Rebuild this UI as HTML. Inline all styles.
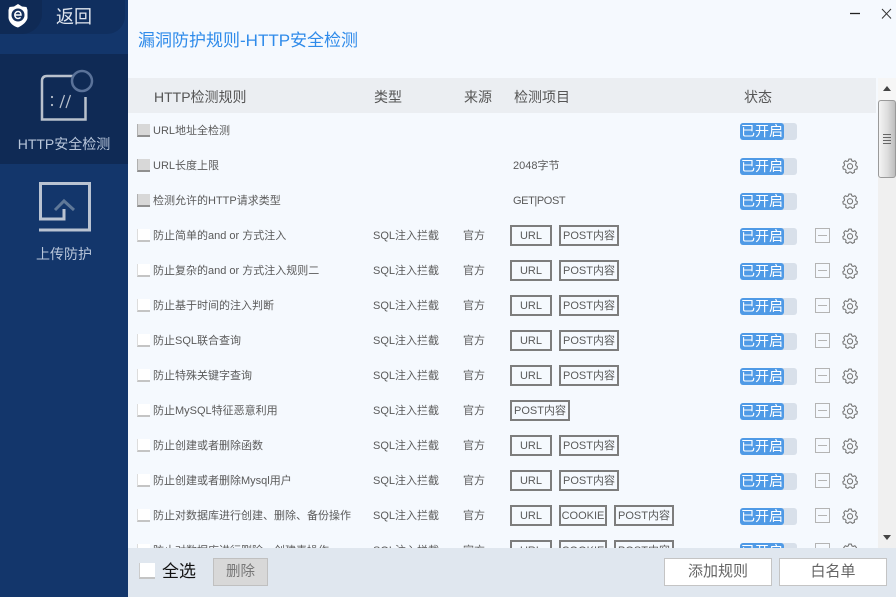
<!DOCTYPE html>
<html><head><meta charset="utf-8">
<style>
html,body{margin:0;padding:0;width:896px;height:597px;overflow:hidden;background:#f5f9fe}
body{position:relative;font-family:"Liberation Sans","Noto Sans CJK SC",sans-serif;color:#555}
*{box-sizing:border-box}
.a{position:absolute;white-space:nowrap}
.t{position:absolute;font-size:11px;line-height:16px;height:16px;margin-top:1px;white-space:nowrap;color:#5a5a5a}
.h{position:absolute;top:88px;font-size:14px;line-height:18px;color:#555;white-space:nowrap}
.b{position:absolute;height:21px;border:2px solid #7d7d7d;font-size:11px;line-height:18px;text-align:center;color:#5a5a5a;white-space:nowrap}
.tg{position:absolute;left:740px;width:57px;height:17px;background:#d8e0ea;border-radius:3px}
.tg i{position:absolute;left:0;top:0;width:44px;height:17px;background:#4f9ae6;border-radius:3px;color:#fff;font-style:normal;font-size:14px;line-height:17px;text-align:center}
.ck{position:absolute;left:137px;width:13px;height:13px;background:#fff;border-left:1px solid #ddd;border-bottom:2px solid #c4c4c4}
.ck.d{background:#d8d8d8;border-left:1px solid #b0b0b0;border-bottom:2px solid #909090}
.m{position:absolute;left:815px;width:15px;height:15px;border:1px solid #b4b4b4}
.m:after{content:"";position:absolute;left:2px;right:2px;top:6px;height:1px;background:#b4b4b4}
svg.g{position:absolute;left:842px;width:16px;height:16px}
</style></head><body>
<svg width="0" height="0" style="position:absolute"><defs>
<symbol id="gear" viewBox="0 0 16 16"><path d="M8 1l1.300.1.6 1.800 1.300.6 1.700-.8 1.600 2-.9 1.600.3 1.400 1.500 1-.5 2.400-1.800.2-.9 1.100.3 1.900-2.200 1.100-1.300-1.300H7.200l-1.300 1.300-2.200-1.100.3-1.900-.9-1.100-1.800-.2-.5-2.400 1.500-1 .3-1.400-.9-1.600 1.600-2 1.700.8 1.300-.6.6-1.800z" fill="none" stroke="#777" stroke-width="1.100" stroke-linejoin="round"/><circle cx="8" cy="8.300" r="2.600" fill="none" stroke="#777" stroke-width="1.100"/></symbol>
</defs></svg>

<!-- sidebar -->
<div class="a" style="left:0;top:0;width:128px;height:597px;background:#13366b"></div>
<div class="a" style="left:0;top:0;width:125px;height:34px;background:#102f5f;border-bottom-right-radius:18px"></div>
<div class="a" style="left:0;top:0;width:42px;height:34px;background:#0f2a55;border-bottom-right-radius:20px"></div>
<svg class="a" style="left:6px;top:3px" width="24" height="26" viewBox="0 0 24 26"><path d="M12 1l4 2.500 4.500.5 1 3v8c-.5 3.500-5 7.500-9.500 9.500C7.500 23.500 3 19.500 2.500 15V7l1-3 4.500-.5z" fill="#fff"/><circle cx="12" cy="12" r="6.500" fill="#16305c"/><path d="M8.800 12h6.200c0-2.200-1.300-3.500-3-3.500s-3.200 1.500-3.200 3.500 1.400 3.500 3.200 3.500c1.100 0 1.900-.4 2.600-1.100" fill="none" stroke="#fff" stroke-width="1.500"/></svg>
<div class="a" style="left:56px;top:5px;font-size:18px;line-height:24px;color:#dfe5ee">返回</div>
<div class="a" style="left:0;top:54px;width:128px;height:110px;background:#0f2a55"></div>
<svg class="a" style="left:36px;top:66px" width="62" height="60" viewBox="0 0 62 60">
<path d="M37 10H11q-5 0-5 5v38.500h43.500V31" fill="none" stroke="#b9c1cd" stroke-width="2.500"/>
<circle cx="46" cy="15" r="10" fill="none" stroke="#5a7299" stroke-width="2.500"/>
<circle cx="16" cy="31" r="1.100" fill="#b9c1cd"/><circle cx="16" cy="39" r="1.100" fill="#b9c1cd"/>
<path d="M24 42l4.500-13M30 42l4.500-13" stroke="#b9c1cd" stroke-width="1.200"/>
</svg>
<div class="a" style="left:0;top:135px;width:128px;text-align:center;font-size:14px;line-height:18px;color:#b8c6da">HTTP安全检测</div>
<svg class="a" style="left:38px;top:181px" width="54" height="52" viewBox="0 0 54 52">
<path d="M1 49h50.500V2.500H2.500V38H26V28" fill="none" stroke="#b9c3d2" stroke-width="3"/>
<path d="M17 29l9-9 10 9" fill="none" stroke="#5f7898" stroke-width="3"/>
</svg>
<div class="a" style="left:0;top:245px;width:128px;text-align:center;font-size:14px;line-height:18px;color:#b8c6da">上传防护</div>

<!-- title -->
<div class="a" style="left:138px;top:30px;font-size:17px;line-height:22px;color:#2f8bea">漏洞防护规则-HTTP安全检测</div>
<svg class="a" style="left:848px;top:6px" width="48" height="16" viewBox="0 0 48 16"><path d="M2 7.500h10" stroke="#222" stroke-width="1.300"/><path d="M34 3l9 9.500M43 3l-9 9.500" stroke="#333" stroke-width="1"/></svg>

<!-- table header -->
<div class="a" style="left:128px;top:78px;width:748px;height:35px;background:#ebeef2"></div>
<div class="h" style="left:154px">HTTP检测规则</div>
<div class="h" style="left:374px">类型</div>
<div class="h" style="left:464px">来源</div>
<div class="h" style="left:514px">检测项目</div>
<div class="h" style="left:744px">状态</div>

<!-- row 1 -->
<div class="ck d" style="top:124px"></div><div class="t" style="left:153px;top:122px">URL地址全检测</div>
<div class="tg" style="top:123px"><i>已开启</i></div>
<!-- row 2 -->
<div class="ck d" style="top:159px"></div><div class="t" style="left:153px;top:157px">URL长度上限</div>
<div class="t" style="left:513px;top:157px">2048字节</div>
<div class="tg" style="top:158px"><i>已开启</i></div><svg class="g" style="top:158px"><use href="#gear"/></svg>
<!-- row 3 -->
<div class="ck d" style="top:194px"></div><div class="t" style="left:153px;top:192px">检测允许的HTTP请求类型</div>
<div class="t" style="left:513px;top:192px;letter-spacing:-.4px">GET|POST</div>
<div class="tg" style="top:193px"><i>已开启</i></div><svg class="g" style="top:193px"><use href="#gear"/></svg>
<!-- row 4 -->
<div class="ck" style="top:229px"></div><div class="t" style="left:153px;top:227px">防止简单的and or 方式注入</div>
<div class="t" style="left:373px;top:227px">SQL注入拦截</div><div class="t" style="left:463px;top:227px">官方</div>
<div class="b" style="left:510px;width:42px;top:225px">URL</div><div class="b" style="left:559px;width:60px;top:225px">POST内容</div>
<div class="tg" style="top:228px"><i>已开启</i></div><div class="m" style="top:228px"></div><svg class="g" style="top:228px"><use href="#gear"/></svg>
<!-- row 5 -->
<div class="ck" style="top:264px"></div><div class="t" style="left:153px;top:262px">防止复杂的and or 方式注入规则二</div>
<div class="t" style="left:373px;top:262px">SQL注入拦截</div><div class="t" style="left:463px;top:262px">官方</div>
<div class="b" style="left:510px;width:42px;top:260px">URL</div><div class="b" style="left:559px;width:60px;top:260px">POST内容</div>
<div class="tg" style="top:263px"><i>已开启</i></div><div class="m" style="top:263px"></div><svg class="g" style="top:263px"><use href="#gear"/></svg>
<!-- row 6 -->
<div class="ck" style="top:299px"></div><div class="t" style="left:153px;top:297px">防止基于时间的注入判断</div>
<div class="t" style="left:373px;top:297px">SQL注入拦截</div><div class="t" style="left:463px;top:297px">官方</div>
<div class="b" style="left:510px;width:42px;top:295px">URL</div><div class="b" style="left:559px;width:60px;top:295px">POST内容</div>
<div class="tg" style="top:298px"><i>已开启</i></div><div class="m" style="top:298px"></div><svg class="g" style="top:298px"><use href="#gear"/></svg>
<!-- row 7 -->
<div class="ck" style="top:334px"></div><div class="t" style="left:153px;top:332px">防止SQL联合查询</div>
<div class="t" style="left:373px;top:332px">SQL注入拦截</div><div class="t" style="left:463px;top:332px">官方</div>
<div class="b" style="left:510px;width:42px;top:330px">URL</div><div class="b" style="left:559px;width:60px;top:330px">POST内容</div>
<div class="tg" style="top:333px"><i>已开启</i></div><div class="m" style="top:333px"></div><svg class="g" style="top:333px"><use href="#gear"/></svg>
<!-- row 8 -->
<div class="ck" style="top:369px"></div><div class="t" style="left:153px;top:367px">防止特殊关键字查询</div>
<div class="t" style="left:373px;top:367px">SQL注入拦截</div><div class="t" style="left:463px;top:367px">官方</div>
<div class="b" style="left:510px;width:42px;top:365px">URL</div><div class="b" style="left:559px;width:60px;top:365px">POST内容</div>
<div class="tg" style="top:368px"><i>已开启</i></div><div class="m" style="top:368px"></div><svg class="g" style="top:368px"><use href="#gear"/></svg>
<!-- row 9 -->
<div class="ck" style="top:404px"></div><div class="t" style="left:153px;top:402px">防止MySQL特征恶意利用</div>
<div class="t" style="left:373px;top:402px">SQL注入拦截</div><div class="t" style="left:463px;top:402px">官方</div>
<div class="b" style="left:510px;width:60px;top:400px">POST内容</div>
<div class="tg" style="top:403px"><i>已开启</i></div><div class="m" style="top:403px"></div><svg class="g" style="top:403px"><use href="#gear"/></svg>
<!-- row 10 -->
<div class="ck" style="top:439px"></div><div class="t" style="left:153px;top:437px">防止创建或者删除函数</div>
<div class="t" style="left:373px;top:437px">SQL注入拦截</div><div class="t" style="left:463px;top:437px">官方</div>
<div class="b" style="left:510px;width:42px;top:435px">URL</div><div class="b" style="left:559px;width:60px;top:435px">POST内容</div>
<div class="tg" style="top:438px"><i>已开启</i></div><div class="m" style="top:438px"></div><svg class="g" style="top:438px"><use href="#gear"/></svg>
<!-- row 11 -->
<div class="ck" style="top:474px"></div><div class="t" style="left:153px;top:472px">防止创建或者删除Mysql用户</div>
<div class="t" style="left:373px;top:472px">SQL注入拦截</div><div class="t" style="left:463px;top:472px">官方</div>
<div class="b" style="left:510px;width:42px;top:470px">URL</div><div class="b" style="left:559px;width:60px;top:470px">POST内容</div>
<div class="tg" style="top:473px"><i>已开启</i></div><div class="m" style="top:473px"></div><svg class="g" style="top:473px"><use href="#gear"/></svg>
<!-- row 12 -->
<div class="ck" style="top:509px"></div><div class="t" style="left:153px;top:507px">防止对数据库进行创建、删除、备份操作</div>
<div class="t" style="left:373px;top:507px">SQL注入拦截</div><div class="t" style="left:463px;top:507px">官方</div>
<div class="b" style="left:510px;width:42px;top:505px">URL</div><div class="b" style="left:559px;width:48px;top:505px">COOKIE</div><div class="b" style="left:614px;width:60px;top:505px">POST内容</div>
<div class="tg" style="top:508px"><i>已开启</i></div><div class="m" style="top:508px"></div><svg class="g" style="top:508px"><use href="#gear"/></svg>
<!-- row 13 -->
<div class="ck" style="top:544px"></div><div class="t" style="left:153px;top:542px">防止对数据库进行删除、创建表操作</div>
<div class="t" style="left:373px;top:542px">SQL注入拦截</div><div class="t" style="left:463px;top:542px">官方</div>
<div class="b" style="left:510px;width:42px;top:540px">URL</div><div class="b" style="left:559px;width:48px;top:540px">COOKIE</div><div class="b" style="left:614px;width:60px;top:540px">POST内容</div>
<div class="tg" style="top:543px"><i>已开启</i></div><div class="m" style="top:543px"></div><svg class="g" style="top:543px"><use href="#gear"/></svg>

<!-- scrollbar -->
<div class="a" style="left:878px;top:78px;width:18px;height:470px;background:#f0f0f0"></div>
<div class="a" style="left:878px;top:78px;width:18px;height:22px;background:#f6f6f6"></div>
<div class="a" style="left:883px;top:86px;width:0;height:0;border-left:4px solid transparent;border-right:4px solid transparent;border-bottom:5px solid #444"></div>
<div class="a" style="left:878px;top:100px;width:18px;height:78px;background:linear-gradient(90deg,#f4f4f4,#dcdcdc 55%,#bdbdbd);border:1px solid #9a9a9a;border-radius:3px"></div>
<svg class="a" style="left:882px;top:133px" width="10" height="12"><path d="M1 1.500h8M1 4.500h8M1 7.500h8M1 10.500h8" stroke="#666"/></svg>
<div class="a" style="left:883px;top:535px;width:0;height:0;border-left:4px solid transparent;border-right:4px solid transparent;border-top:5px solid #444"></div>

<!-- footer -->
<div class="a" style="left:128px;top:548px;width:768px;height:49px;background:#e0e7ef"></div>
<div class="a" style="left:139px;top:563px;width:16px;height:16px;background:#fff;border-left:1px solid #ccc;border-bottom:2px solid #c4c4c4"></div>
<div class="a" style="left:162px;top:562px;font-size:17px;line-height:20px;color:#111">全选</div>
<div class="a" style="left:213px;top:558px;width:55px;height:28px;background:#d8d8d8;border:1px solid #c0c0c0;font-size:14.500px;line-height:26px;text-align:center;color:#777">删除</div>
<div class="a" style="left:664px;top:558px;width:108px;height:28px;background:#fff;border:1px solid #c4c4c4;font-size:15px;line-height:26px;text-align:center;color:#666">添加规则</div>
<div class="a" style="left:779px;top:558px;width:108px;height:28px;background:#fff;border:1px solid #c4c4c4;font-size:15px;line-height:26px;text-align:center;color:#666">白名单</div>
</body></html>
